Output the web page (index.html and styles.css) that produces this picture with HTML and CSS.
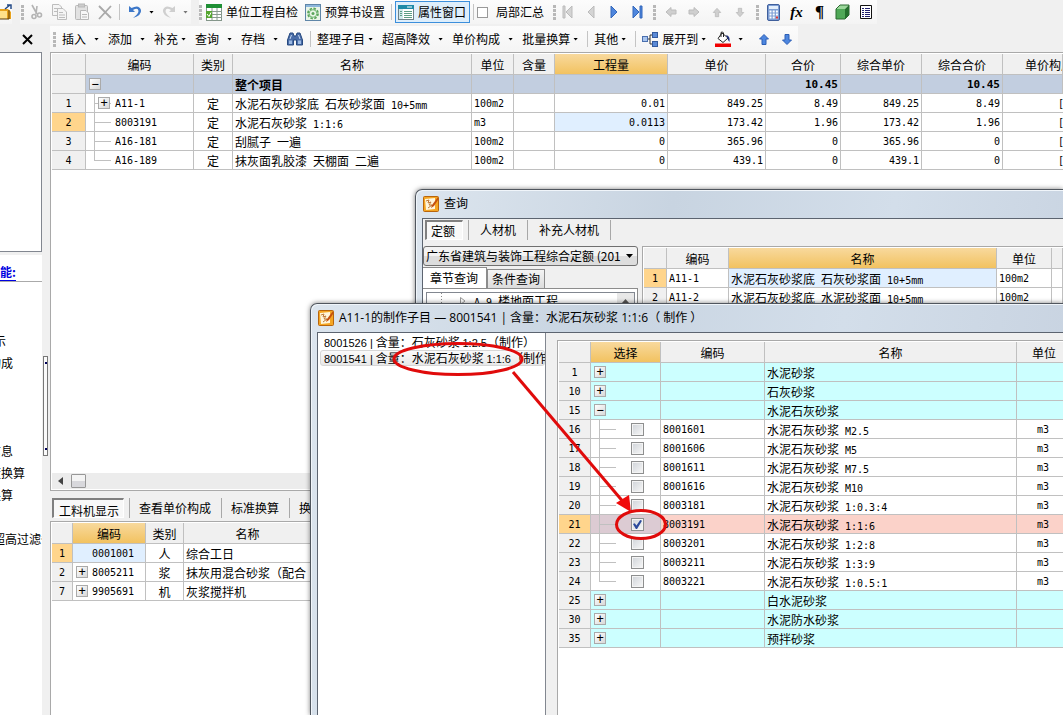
FILE: index.html
```html
<!DOCTYPE html>
<html lang="zh-CN">
<head>
<meta charset="utf-8">
<title>预算书</title>
<link rel="stylesheet" href="styles.css">
</head>
<body>
<div class="app">
  <header class="top">
    <div class="bar">
      <button class="folder" aria-label="打开"><svg width="12" height="18" viewBox="0 0 12 18"><path d="M-1 6H8L11 9V16H-1Z" fill="#e8a21c"/><path d="M-1 8H7V16H-1Z" fill="#ffe08a"/><path d="M-1 16H9V7" fill="none" stroke="#5a3a08"/><path d="M5 6L10 2M7 2H11V6" fill="none" stroke="#234a86" stroke-width="1.5"/></svg></button>
    </div>
    <div class="bar">
      <i class="grip"></i>
      <button class="tool" aria-label="剪切"><svg width="16" height="18" viewBox="0 0 16 18" fill="none" stroke="#b4b4b4" stroke-width="1.6"><path d="M4 2L9 11M9 3L8 11" /><circle cx="6" cy="13.500" r="2"/><circle cx="11.500" cy="12" r="2"/></svg></button>
      <button class="tool" aria-label="复制"><svg width="16" height="18" viewBox="0 0 16 18" fill="#f5f5f5" stroke="#bdbdbd"><path d="M1.500 1.500H8L10.500 4V12.500H1.500Z"/><path d="M3 5.500H7M3 8.500H6"/><path d="M6.500 5.500H12L15.500 9V16.500H6.500Z"/><path d="M8 9.500H12M8 12H14M8 14.500H14"/></svg></button>
      <button class="tool" aria-label="粘贴"><svg width="16" height="18" viewBox="0 0 16 18" fill="#e2e2e2" stroke="#b8b8b8"><rect x="1.500" y="2.500" width="12" height="14" rx="1"/><rect x="4.500" y="1" width="6" height="3" fill="#ccc"/><path d="M6.500 7.500H12L14.500 10V16.500H6.500Z" fill="#f7f7f7"/><path d="M8 11.500H13M8 14H13"/></svg></button>
      <button class="tool" aria-label="删除"><svg width="16" height="18" viewBox="0 0 16 18"><path d="M2 3L14 15M14 3L2 16" stroke="#a9a9a9" stroke-width="1.800"/></svg></button>
      <i class="sep"></i>
      <button class="tool" aria-label="撤销"><svg width="14" height="16" viewBox="0 0 14 16"><path d="M1 2V8H7L5 6Q10 3 10.500 7Q10.500 10 5 14Q14 11 13 6Q11 0 3.500 4Z" fill="#3d78c9"/></svg></button>
      <i class="arrow"></i>
      <button class="tool" aria-label="重做"><svg width="14" height="16" viewBox="0 0 14 16"><path d="M13 2V8H7L9 6Q4 3 3.500 7Q3.500 10 9 14Q0 11 1 6Q3 0 10.500 4Z" fill="#cfcfcf"/></svg></button>
      <i class="arrow dim"></i>
    </div>
    <div class="bar fill">
      <i class="grip"></i>
      <button class="label"><svg width="16" height="17" viewBox="0 0 16 17"><rect x=".5" y=".5" width="15" height="16" fill="#fff" stroke="#84968a"/><path d="M0 0H16V4H0Z" fill="#1f8f35"/><path d="M0 7.500H16M0 10.500H16M0 13.500H16M6 4V17M11 4V17" stroke="#8a9a90"/><path d="M0 7H6V14H0Z" fill="#55a630"/><path d="M1 10L3 12.500L5 8.500" stroke="#fff" fill="none"/></svg>单位工程自检</button>
      <button class="label"><svg width="16" height="17" viewBox="0 0 16 17"><rect x=".5" y=".5" width="15" height="16" fill="#eaf5e8" stroke="#5f86a8"/><path d="M1 2H15" stroke="#8db6dc" stroke-width="2"/><circle cx="8" cy="9.500" r="5" fill="none" stroke="#5ba65b" stroke-width="1.800" stroke-dasharray="2.500 1.400"/><circle cx="8" cy="9.500" r="3.800" fill="none" stroke="#76b876"/><circle cx="8" cy="9.500" r="1.500" fill="#5ba65b"/></svg>预算书设置</button>
      <i class="sep"></i>
      <button class="label on"><svg width="16" height="15" viewBox="0 0 16 15"><rect x=".5" y=".5" width="15" height="14" fill="#fff" stroke="#6d8188"/><path d="M0 0H16V4H0Z" fill="#1e8aa8"/><path d="M9 2H14" stroke="#fff"/><path d="M1 4H5V14H1Z" fill="#cfe8ec"/><path d="M2 6.500H4M2 8.500H4M2 10.500H4M6 6.500H14M6 8.500H14M6 10.500H14M6 12.500H14" stroke="#5d9e86"/></svg>属性窗口</button>
      <i class="sep"></i>
      <label class="check"><input type="checkbox" class="plain">局部汇总</label>
      <i class="grip"></i>
      <button class="tool" aria-label="首条"><svg width="12" height="14" viewBox="0 0 12 14"><path d="M1 1H3V13H1ZM10 1V13L4 7Z" fill="#d4d4d4" stroke="#bbb"/></svg></button>
      <button class="tool" aria-label="上一条"><svg width="12" height="14" viewBox="0 0 12 14"><path d="M9 1V13L3 7Z" fill="#d4d4d4" stroke="#bbb"/></svg></button>
      <button class="tool" aria-label="下一条"><svg width="12" height="14" viewBox="0 0 12 14"><path d="M3 1V13L9 7Z" fill="#4e86dd" stroke="#3267bb"/></svg></button>
      <button class="tool" aria-label="末条"><svg width="12" height="14" viewBox="0 0 12 14"><path d="M2 1V13L8 7ZM9 1H11V13H9Z" fill="#4e86dd" stroke="#3267bb"/></svg></button>
      <i class="grip"></i>
      <button class="tool" aria-label="左移"><svg width="12" height="12" viewBox="0 0 12 12"><path d="M1 6L6 1.500V4H11V8H6V10.500Z" fill="#cfcfcf" stroke="#bcbcbc"/></svg></button>
      <button class="tool" aria-label="右移"><svg width="12" height="12" viewBox="0 0 12 12"><path d="M11 6L6 1.500V4H1V8H6V10.500Z" fill="#cfcfcf" stroke="#bcbcbc"/></svg></button>
      <button class="tool" aria-label="上移"><svg width="10" height="11" viewBox="0 0 12 12"><path d="M6 1L1.500 6H4V11H8V6H10.500Z" fill="#cfcfcf" stroke="#bcbcbc"/></svg></button>
      <button class="tool" aria-label="下移"><svg width="10" height="11" viewBox="0 0 12 12"><path d="M6 11L1.500 6H4V1H8V6H10.500Z" fill="#cfcfcf" stroke="#bcbcbc"/></svg></button>
      <i class="grip"></i>
      <button class="tool" aria-label="计算器"><svg width="13" height="17" viewBox="0 0 13 17"><rect x=".5" y=".5" width="12" height="16" rx="1.500" fill="#7d9ed4" stroke="#3f5f9c"/><path d="M2 2H11V5H2Z" fill="#e3eefb"/><path d="M2.500 7.500H11M2.500 10.500H11M2.500 13.500H11" stroke="#fff" stroke-width="2" stroke-dasharray="2 1.200"/><path d="M8.900 13.500H11" stroke="#d33" stroke-width="2"/></svg></button>
      <button class="tool fx">fx</button>
      <button class="tool para">¶</button>
      <button class="tool" aria-label="立方体"><svg width="15" height="16" viewBox="0 0 15 16"><path d="M1 5L5 1H14L10 5Z" fill="#9bd79b"/><path d="M1 5H10V15H1Z" fill="#4fa857"/><path d="M10 5L14 1V11L10 15Z" fill="#23702c"/><path d="M1 5L5 1H14V11L10 15H1Z" fill="none" stroke="#2a6a30"/></svg></button>
      <button class="tool" aria-label="列表"><svg width="12" height="14" viewBox="0 0 12 14"><path d="M.5.500H11.500V13.500H.5Z" fill="#fff" stroke="#111"/><path d="M2 3.500H4M2 5.500H4M2 7.500H4M2 9.500H4M2 11.500H4M5 3.500H10M5 5.500H10M5 7.500H10M5 9.500H10M5 11.500H10" stroke="#22226e"/></svg></button>
    </div>
  </header>

  <div class="body">
    <aside class="side">
      <div class="sidetop"><button aria-label="关闭"><svg width="11" height="11" viewBox="0 0 11 11"><path d="M1 1L10 10M10 1L1 10" stroke="#000" stroke-width="2"/></svg></button></div>
      <div class="sidebox"></div>
      <h2 class="sidehead"><a href="#">能:</a></h2>
      <ul class="sidelist">
        <li class="short">示</li>
        <li>构成</li>
        <li class="jump">目</li>
        <li>信息</li>
        <li>度换算</li>
        <li>换算</li>
        <li class="skip">超高过滤条</li>
      </ul>
    </aside>
    <div class="gutter"><span class="knob"></span></div>
    <main class="main">
      <div class="bar commands">
        <i class="grip"></i>
        <button class="split">插入<i class="arrow"></i></button>
        <button class="split">添加<i class="arrow"></i></button>
        <button class="split tight">补充<i class="arrow"></i></button>
        <button class="split">查询<i class="arrow"></i></button>
        <button class="split">存档<i class="arrow"></i></button>
        <button class="icon" aria-label="查找"><svg width="16" height="14" viewBox="0 0 16 14"><path d="M3 1H6L7 4H9L10 1H13L15.500 8V13H9.500V8H6.500V13H.5V8Z" fill="#4a6da8" stroke="#274a80"/><path d="M2 8.500H5V12H2ZM11 8.500H14V12H11Z" fill="#9bb9e2"/><path d="M4.500 3L3 7M11.500 3L13 7" stroke="#c6d9f2"/></svg></button>
        <i class="sep"></i>
        <button class="split tight">整理子目<i class="arrow"></i></button>
        <button class="split">超高降效<i class="arrow"></i></button>
        <button class="split">单价构成<i class="arrow"></i></button>
        <button class="split tight">批量换算<i class="arrow"></i></button>
        <i class="sep"></i>
        <button class="split tight">其他<i class="arrow"></i></button>
        <i class="sep"></i>
        <button class="split tight"><svg width="16" height="15" viewBox="0 0 16 15"><path d="M5 7H8M11 3H8V12H11" fill="none" stroke="#333"/><rect x=".5" y="4.500" width="5" height="5" fill="#a9c5ee" stroke="#4a6fae"/><rect x="10.500" y=".5" width="5" height="5" fill="#5b8ad6" stroke="#335a9e"/><rect x="10.500" y="9.500" width="5" height="5" fill="#5b8ad6" stroke="#335a9e"/></svg>展开到<i class="arrow"></i></button>
        <button class="split tight" aria-label="填充颜色"><svg width="16" height="16" viewBox="0 0 16 16"><path d="M7 2L13 7L8 11.500L3 7.500Z" fill="#fff" stroke="#222"/><path d="M6 6V1.500Q7.500 0 8.500 2V6" fill="none" stroke="#222"/><path d="M11 4Q15.500 5 14.500 11Q12.500 9 12.500 7Z" fill="#1d2f7d"/><path d="M0 12.500H16V16H0Z" fill="#f00000"/></svg><i class="arrow"></i></button>
        <button class="tool" aria-label="上移"><svg width="10" height="11" viewBox="0 0 10 11"><path d="M5 .5L.5 5H3V10.500H7V5H9.500Z" fill="#4d86df" stroke="#2c5fb5"/></svg></button>
        <button class="tool" aria-label="下移"><svg width="10" height="11" viewBox="0 0 10 11"><path d="M5 10.500L.5 6H3V.5H7V6H9.500Z" fill="#4d86df" stroke="#2c5fb5"/></svg></button>
      </div>

      <section class="grid maingrid">
        <table>
          <colgroup><col class="w34"><col class="w108"><col class="w39"><col class="w239"><col class="w42"><col class="w41"><col class="w113"><col class="w98"><col class="w75"><col class="w81"><col class="w81"><col></colgroup>
          <thead><tr><th></th><th>编码</th><th>类别</th><th>名称</th><th>单位</th><th>含量</th><th class="hot">工程量</th><th>单价</th><th>合价</th><th>综合单价</th><th>综合合价</th><th class="cut">单价构成</th></tr></thead>
          <tbody>
            <tr class="total"><th></th><td class="node"><button class="toggle" aria-label="折叠">−</button></td><td></td><td>整个项目</td><td></td><td></td><td></td><td></td><td class="num">10.45</td><td></td><td class="num">10.45</td><td></td></tr>
            <tr><th>1</th><td class="branch code child"><button class="toggle" aria-label="展开">+</button>A11-1</td><td class="mid">定</td><td>水泥石灰砂浆底<span class="n"> </span>石灰砂浆面<span class="n"> 10+5mm</span></td><td class="n">100m2</td><td></td><td class="num">0.01</td><td class="num">849.25</td><td class="num">8.49</td><td class="num">849.25</td><td class="num">8.49</td><td class="n cutcell">[</td></tr>
            <tr><th class="cur">2</th><td class="branch code">8003191</td><td class="mid">定</td><td>水泥石灰砂浆<span class="n"> 1:1:6</span></td><td class="n">m3</td><td></td><td class="num sel">0.0113</td><td class="num">173.42</td><td class="num">1.96</td><td class="num">173.42</td><td class="num">1.96</td><td class="n cutcell">[</td></tr>
            <tr><th>3</th><td class="branch code">A16-181</td><td class="mid">定</td><td>刮腻子<span class="n"> </span>一遍</td><td class="n">100m2</td><td></td><td class="num">0</td><td class="num">365.96</td><td class="num">0</td><td class="num">365.96</td><td class="num">0</td><td class="n cutcell">[</td></tr>
            <tr><th>4</th><td class="branch last code">A16-189</td><td class="mid">定</td><td>抹灰面乳胶漆<span class="n"> </span>天棚面<span class="n"> </span>二遍</td><td class="n">100m2</td><td></td><td class="num">0</td><td class="num">439.1</td><td class="num">0</td><td class="num">439.1</td><td class="num">0</td><td class="n cutcell">[</td></tr>
          </tbody>
        </table>
        <div class="scroll"><svg width="5" height="8" viewBox="0 0 5 8"><path d="M5 0V8L0 4Z" fill="#444"/></svg><span class="thumb"></span></div>
      </section>

      <nav class="tabs">
        <button class="tab active">工料机显示</button><button class="tab">查看单价构成</button><button class="tab">标准换算</button><button class="tab">换算信息</button>
      </nav>

      <section class="grid subgrid">
        <table>
          <colgroup><col class="w21"><col class="w73"><col class="w38"><col class="w128"><col></colgroup>
          <thead><tr><th></th><th class="hot">编码</th><th>类别</th><th>名称</th><th></th></tr></thead>
          <tbody>
            <tr><th class="cur">1</th><td class="item sel">0001001</td><td class="mid">人</td><td>综合工日</td><td></td></tr>
            <tr><th>2</th><td class="item node"><button class="toggle" aria-label="展开">+</button>8005211</td><td class="mid">浆</td><td>抹灰用混合砂浆（配合</td><td></td></tr>
            <tr><th>7</th><td class="item node"><button class="toggle" aria-label="展开">+</button>9905691</td><td class="mid">机</td><td>灰浆搅拌机</td><td></td></tr>
          </tbody>
        </table>
      </section>
    </main>
  </div>

  <section class="window query">
    <header class="title"><svg width="16" height="16" viewBox="0 0 16 16"><rect x=".5" y=".5" width="15" height="15" rx="1" fill="#f5a623" stroke="#b8650c"/><path d="M2 3L12 2L12 13L3 14Z" fill="#fff6dc"/><path d="M3 5L6 4L5 7L8 6L6 9L9 9L5 12" fill="none" stroke="#c07a3a"/><path d="M15 1L9 9L8 12L11 10L15 4Z" fill="#c4500f"/></svg>查询</header>
    <div class="client">
      <nav class="tabs">
        <button class="tab active">定额</button><button class="tab">人材机</button><button class="tab">补充人材机</button><i class="end"></i>
      </nav>
      <div class="cols">
        <div class="finder">
          <div class="combo"><select aria-label="定额库"><option>广东省建筑与装饰工程综合定额 (201</option></select><i class="arrow"></i></div>
          <div class="pagetabs"><button class="front">章节查询</button><button>条件查询</button></div>
          <div class="page"><div class="tree"><i class="dots"></i><svg width="6" height="8" viewBox="0 0 6 8"><path d="M.5.500V7.500L5 4Z" fill="#fff" stroke="#999"/></svg><span><span class="n">A.9 </span>楼地面工程</span><span class="up"><svg width="7" height="4" viewBox="0 0 7 4"><path d="M0 4L3.500 0L7 4Z" fill="#555"/></svg></span></div></div>
        </div>
        <div class="grid">
          <table>
            <colgroup><col class="w23"><col class="w62"><col class="w268"><col class="w55"><col></colgroup>
            <thead><tr><th></th><th>编码</th><th class="hot">名称</th><th>单位</th><th></th></tr></thead>
            <tbody>
              <tr><th class="cur">1</th><td class="n">A11-1</td><td class="sel">水泥石灰砂浆底<span class="n"> </span>石灰砂浆面<span class="n"> 10+5mm</span></td><td class="n">100m2</td><td></td></tr>
              <tr><th>2</th><td class="n">A11-2</td><td>水泥石灰砂浆底<span class="n"> </span>水泥砂浆面<span class="n"> 10+5mm</span></td><td class="n">100m2</td><td></td></tr>
            </tbody>
          </table>
        </div>
      </div>
    </div>
  </section>

  <section class="window make">
    <header class="title"><svg width="16" height="16" viewBox="0 0 16 16"><rect x=".5" y=".5" width="15" height="15" rx="1" fill="#f5a623" stroke="#b8650c"/><path d="M2 3L12 2L12 13L3 14Z" fill="#fff6dc"/><path d="M3 5L6 4L5 7L8 6L6 9L9 9L5 12" fill="none" stroke="#c07a3a"/><path d="M15 1L9 9L8 12L11 10L15 4Z" fill="#c4500f"/></svg>A11-1的制作子目 — 8001541 | 含量：水泥石灰砂浆 1:1:6（ 制作 ）</header>
    <div class="client split2">
      <ul class="list">
        <li><span class="s">8001526 | </span>含量：石灰砂浆 <span class="s">1:2.5</span>（制作）</li>
        <li class="picked"><span class="s">8001541 | </span>含量：水泥石灰砂浆 <span class="s">1:1:6</span>（制作）</li>
      </ul>
      <div class="grid">
        <table>
          <colgroup><col class="w32"><col class="w70"><col class="w104"><col><col class="w46"></colgroup>
          <thead><tr><th></th><th class="hot">选择</th><th>编码</th><th>名称</th><th class="edge">单位</th></tr></thead>
          <tbody>
            <tr class="group"><th>1</th><td class="node"><button class="toggle" aria-label="展开">+</button></td><td></td><td>水泥砂浆</td><td class="edge"></td></tr>
            <tr class="group"><th>10</th><td class="node"><button class="toggle" aria-label="展开">+</button></td><td></td><td>石灰砂浆</td><td class="edge"></td></tr>
            <tr class="group"><th>15</th><td class="node"><button class="toggle" aria-label="折叠">−</button></td><td></td><td>水泥石灰砂浆</td><td class="edge"></td></tr>
            <tr><th>16</th><td class="branch pick"><input type="checkbox" aria-label="8001601"></td><td class="n">8001601</td><td>水泥石灰砂浆<span class="n"> M2.5</span></td><td class="unit edge">m3</td></tr>
            <tr><th>17</th><td class="branch pick"><input type="checkbox" aria-label="8001606"></td><td class="n">8001606</td><td>水泥石灰砂浆<span class="n"> M5</span></td><td class="unit edge">m3</td></tr>
            <tr><th>18</th><td class="branch pick"><input type="checkbox" aria-label="8001611"></td><td class="n">8001611</td><td>水泥石灰砂浆<span class="n"> M7.5</span></td><td class="unit edge">m3</td></tr>
            <tr><th>19</th><td class="branch pick"><input type="checkbox" aria-label="8001616"></td><td class="n">8001616</td><td>水泥石灰砂浆<span class="n"> M10</span></td><td class="unit edge">m3</td></tr>
            <tr><th>20</th><td class="branch pick"><input type="checkbox" aria-label="8003181"></td><td class="n">8003181</td><td>水泥石灰砂浆<span class="n"> 1:0.3:4</span></td><td class="unit edge">m3</td></tr>
            <tr class="chosen"><th class="cur">21</th><td class="branch pick"><input type="checkbox" aria-label="8003191" checked></td><td class="n">8003191</td><td>水泥石灰砂浆<span class="n"> 1:1:6</span></td><td class="unit edge">m3</td></tr>
            <tr><th>22</th><td class="branch pick"><input type="checkbox" aria-label="8003201"></td><td class="n">8003201</td><td>水泥石灰砂浆<span class="n"> 1:2:8</span></td><td class="unit edge">m3</td></tr>
            <tr><th>23</th><td class="branch pick"><input type="checkbox" aria-label="8003211"></td><td class="n">8003211</td><td>水泥石灰砂浆<span class="n"> 1:3:9</span></td><td class="unit edge">m3</td></tr>
            <tr><th>24</th><td class="branch last pick"><input type="checkbox" aria-label="8003221"></td><td class="n">8003221</td><td>水泥石灰砂浆<span class="n"> 1:0.5:1</span></td><td class="unit edge">m3</td></tr>
            <tr class="group"><th>25</th><td class="node"><button class="toggle" aria-label="展开">+</button></td><td></td><td>白水泥砂浆</td><td class="edge"></td></tr>
            <tr class="group"><th>30</th><td class="node"><button class="toggle" aria-label="展开">+</button></td><td></td><td>水泥防水砂浆</td><td class="edge"></td></tr>
            <tr class="group"><th>35</th><td class="node"><button class="toggle" aria-label="展开">+</button></td><td></td><td>预拌砂浆</td><td class="edge"></td></tr>
          </tbody>
        </table>
      </div>
    </div>
    <svg class="marks" width="360" height="240" viewBox="310 303 360 240"><g fill="none" stroke="#e00b0b" stroke-width="3"><ellipse cx="458" cy="359" rx="64" ry="15.500"/><ellipse cx="641" cy="524.500" rx="24.500" ry="14"/><path d="M513 372L625 504"/></g><path d="M631 512L616 503L629 495Z" fill="#f00b0b"/></svg>
  </section>
</div>
</body>
</html>
```

FILE: styles.css
```css
* { box-sizing: border-box; }
body {
  margin: 0;
  background: #f0f0f0;
  color: #000;
  font: 12px/18px "Noto Sans CJK SC", sans-serif;
  overflow: hidden;
}
button {
  font: inherit;
  color: inherit;
  background: none;
  border: 0;
  margin: 0;
  padding: 0;
  white-space: nowrap;
}
svg { display: block; flex: none; }
h2, ul { margin: 0; padding: 0; list-style: none; }

.app { position: relative; display: flex; flex-direction: column; height: 100vh; overflow: hidden; }

/* toolbars */
.top { display: flex; flex: none; height: 26px; gap: 8px; }
.bar { display: flex; align-items: center; width: fit-content; height: 24px; background: linear-gradient(#fcfcfc, #f4f4f4); }
.folder { width: 12px; }
.grip { flex: none; width: 3px; height: 15px; margin-left: 1px; background: repeating-linear-gradient(#b8b8b8 0 3px, transparent 3px 4px); }
.fill > .grip:first-child { margin-left: 0; }
.tool { display: flex; flex: none; align-items: center; justify-content: center; width: 23px; height: 22px; }
.sep { flex: none; width: 1px; height: 16px; margin: 0 3px; background: #c4c4c4; }
.arrow { flex: none; width: 5px; height: 3px; background: #000; clip-path: polygon(0 0, 100% 0, 50% 100%); }
.top .arrow { margin: 0 3px; }
.arrow.dim { background: #777; }
.label { display: flex; align-items: center; gap: 4px; padding: 0 3px 0 4px; }
.label.on { height: 22px; padding: 0 3px 0 2px; border: 1px solid #3c8fdc; background: #deeefb; }
.check { display: flex; align-items: center; gap: 8px; padding-right: 8px; white-space: nowrap; }
.plain { appearance: none; width: 11px; height: 11px; margin: 0; border: 1px solid #999; background: #fff; }
.tool + .grip { margin: 0 3px 0 5px; }
.fx { font: italic bold 15px/20px "Liberation Serif", serif; }
.para { font: bold 17px/20px "Liberation Serif", serif; }
.commands { flex: none; height: 26px; }
.commands .grip { margin: 0 6px 0 3px; }
.commands .sep { margin: 0 6px 0 0; }
.split { display: flex; align-items: center; padding-right: 9px; }
.split svg { margin-right: 4px; }
.split .arrow { margin-left: 8px; }
.split.tight .arrow { margin-left: 3px; }
.icon { padding-right: 7px; }

/* left panel */
.body { display: flex; flex: 1; min-height: 0; }
.side { display: flex; flex: none; flex-direction: column; width: 42px; overflow: hidden; background: #fff; }
.sidetop { display: flex; align-items: center; flex: none; height: 26px; padding-left: 22px; background: #f0f0f0; }
.sidebox { flex: none; height: 200px; border: 1px solid #828790; border-left: 0; }
.sidehead { flex: none; height: 30px; padding-top: 8px; border-top: 3px solid #f0f0f0; border-bottom: 1px solid #aaa; font-size: 12px; line-height: 18px; }
.sidehead a { color: #0000e0; text-decoration: none; border-bottom: 1px solid #0000e0; }
.sidelist { padding-top: 48px; white-space: nowrap; }
.sidelist li { height: 22px; line-height: 22px; text-indent: -11px; }
.sidelist .short { text-indent: -6px; }
.sidelist .jump { margin-top: 44px; }
.sidelist .skip { margin-top: 22px; text-indent: -7px; }
.gutter { flex: none; width: 8px; padding: 330px 2px 0 1px; }
.knob { display: block; height: 100px; border: 1px solid #777; background: radial-gradient(circle, #00005a 1px, transparent 1px) 0 4px / 4px 4px no-repeat, radial-gradient(circle, #00005a 1px, transparent 1px) 0 90px / 4px 4px no-repeat, #fafafa; }
.main { display: flex; flex: 1; flex-direction: column; min-width: 0; }

/* grids */
.grid { border: 1px solid #a9a9a9; border-right: 0; padding: 1px 0 0 1px; background: #fff; overflow: hidden; }
.maingrid { display: flex; flex: 1; flex-direction: column; }
.subgrid { flex: none; height: 194px; border-bottom: 0; }
table { width: 100%; table-layout: fixed; border-collapse: separate; border-spacing: 0; }
th, td {
  height: 19px;
  padding: 1px 2px 0;
  border: 0 solid #c0c0c0;
  border-width: 0 1px 1px 0;
  overflow: hidden;
  white-space: nowrap;
  text-align: left;
  font-weight: 400;
  line-height: 17px;
}
th { background: #f0f0f0; text-align: center; }
thead th { height: 21px; line-height: 19px; }
tbody th, .n, .num, .code, .item, .unit { font-family: "DejaVu Sans Mono", "Noto Sans CJK SC", monospace; font-size: 10px; }
span.n { line-height: 10px; white-space: pre; }
.num { text-align: right; }
.mid { text-align: center; }
.unit { padding-left: 20px; }
.edge { border-right: 0; }
.hot { background: linear-gradient(#f8d99d, #f2c260); }
tbody .cur { background: #ffd58c; }
.sel { background: #e0efff; }
.total td { background: #c2cee0; font-weight: 700; }
.total .num { font-size: 11px; }
.group td { background: #ccffff; }
.chosen td { background-color: #fbd2c9; }
.chosen .pick { background-color: #dccbd3; }
.cut { text-align: left; padding-left: 22px; }
.cutcell { padding: 1px 0 0 55px; border-right: 0; }
.branch {
  padding-left: 29px;
  background-image: linear-gradient(#c0c0c0, #c0c0c0), linear-gradient(#c0c0c0, #c0c0c0);
  background-position: 8px 0, 8px 9px;
  background-size: 1px 100%, 17px 1px;
  background-repeat: no-repeat;
}
.branch.last { background-size: 1px 9px, 17px 1px; }
.child { padding-left: 12px; }
.child .toggle { margin-right: 5px; }
.node { padding-left: 3px; }
.item { padding-left: 19px; }
.item.node { padding-left: 3px; }
.item .toggle { margin-right: 4px; }
.pick { padding-left: 40px; }
.toggle {
  width: 12px;
  height: 12px;
  margin-top: 2px;
  border: 1px solid #aaa;
  background: linear-gradient(135deg, #fff, #d8d8d8);
  font: 12px/10px "DejaVu Sans Mono", monospace;
  text-align: center;
  vertical-align: top;
}
.pick input {
  display: block;
  appearance: none;
  width: 13px;
  height: 13px;
  margin: 0;
  border: 1px solid #8e8f8f;
  box-shadow: inset 0 0 0 1px #f4f4f4;
  background: linear-gradient(135deg, #cfd3d8, #f8f8f8);
}
.pick input:checked::before { content: ""; display: block; width: 9px; height: 9px; margin: 1px; background: #2c4a9c; clip-path: polygon(0 45%, 20% 35%, 38% 62%, 80% 0, 100% 8%, 45% 100%, 32% 100%); }
.w21 { width: 21px; } .w23 { width: 23px; } .w32 { width: 32px; } .w34 { width: 34px; }
.w38 { width: 38px; } .w39 { width: 39px; } .w41 { width: 41px; } .w42 { width: 42px; }
.w46 { width: 46px; } .w55 { width: 55px; } .w62 { width: 62px; } .w70 { width: 70px; }
.w73 { width: 73px; } .w75 { width: 75px; } .w81 { width: 81px; } .w98 { width: 98px; }
.w104 { width: 104px; } .w108 { width: 108px; } .w113 { width: 113px; } .w128 { width: 128px; }
.w239 { width: 239px; } .w268 { width: 268px; }
th.edge { padding-left: 10px; }

.scroll { display: flex; align-items: center; gap: 8px; height: 16px; margin: auto 0 1px; padding-left: 6px; background: #ececec; }
.thumb { width: 15px; height: 14px; border: 1px solid #979797; border-radius: 1px; background: linear-gradient(#f4f4f4 50%, #d8d8dc 50%); }

/* tab strips */
.tabs { display: flex; flex: none; align-items: center; height: 30px; padding: 4px 0 0 2px; }
.tab { height: 20px; padding: 0 10px 0 9px; border-left: 1px solid #a8a8a8; }
.tab.active { margin-right: 5px; padding: 2px 4px 0 5px; border: 1px solid #fff; border-top: 2px solid #808080; border-left: 2px solid #808080; background: #f8f8f8; line-height: 17px; }

/* floating windows */
.window {
  position: absolute;
  right: 0;
  bottom: 0;
  display: flex;
  flex-direction: column;
  padding-left: 6px;
  border: 1px solid #50565e;
  border-width: 1px 0 0 1px;
  border-radius: 7px 0 0 0;
  background: linear-gradient(100deg, #dce5ee, #c8d4e1 35%, #d3deea 65%, #c6d1df);
  box-shadow: inset 1px 1px 0 #f0f5fa, 0 0 5px rgba(0, 0, 0, 0.5);
}
.query { left: 415px; top: 189px; }
.make { left: 310px; top: 303px; }
.title { display: flex; align-items: center; gap: 5px; flex: none; height: 28px; padding-left: 1px; font-family: "Open Sans", "Noto Sans CJK SC", sans-serif; white-space: nowrap; }
.client { flex: 1; min-height: 0; border: 1px solid #5c6470; border-width: 1px 0 0 1px; background: #f0f0f0; }
.query .tabs { height: 22px; padding-top: 0; }
.query .tab { padding: 0 11px; }
.query .tab.active { padding: 0 7px 0 4px; }
.end { width: 1px; height: 20px; background: #a8a8a8; }
.cols { display: flex; padding-top: 5px; }
.finder { flex: none; width: 215px; margin-right: 4px; }
.combo { display: flex; align-items: center; height: 20px; border: 1px solid #707070; border-radius: 3px; background: linear-gradient(#f3f3f3 50%, #dddddd 50%); }
.combo select { appearance: none; width: 200px; height: 18px; padding: 0 0 0 2px; border: 0; background: none; color: #000; font: 12px/18px "Noto Sans CJK SC", sans-serif; }
.combo .arrow { width: 7px; height: 4px; margin-left: 2px; }
.pagetabs { display: flex; align-items: flex-end; height: 22px; }
.pagetabs button { height: 19px; padding: 0 4px; border: 1px solid #8c8c8c; border-bottom: 0; background: linear-gradient(#f4f4f4, #dcdcdc); }
.pagetabs .front { height: 21px; padding: 0 8px 0 7px; border-left: 0; background: #fff; }
.page { height: 200px; padding: 3px 2px 0 3px; border: 1px solid #8c8c8c; border-left: 0; background: #fff; }
.tree { display: flex; align-items: center; height: 18px; border: 1px solid #828790; line-height: 16px; }
.dots { width: 1px; height: 16px; margin: 0 18px 0 14px; background: repeating-linear-gradient(#888 0 1px, transparent 1px 3px); }
.tree svg { margin-right: 8px; }
.up { display: flex; align-items: center; width: 17px; height: 16px; margin-left: auto; padding-left: 5px; background: #e8e8e8; }
.cols .grid { flex: 1; min-width: 0; }
.split2 { display: flex; }
.list { flex: none; width: 228px; padding: 1px 0 0 2px; border-right: 1px solid #828790; background: #fff; overflow: hidden; white-space: nowrap; }
.list li { height: 16px; padding-left: 3px; border: 1px solid transparent; line-height: 14px; }
.list .picked { border-color: #d6d6d6; border-radius: 3px; background: linear-gradient(#fafafa, #e8e8e8); }
.s { font-family: "Liberation Sans", sans-serif; font-size: 11px; white-space: pre; }
.split2 .grid { flex: 1; min-width: 0; margin: 7px 0 0 11px; border-bottom: 0; }
.marks { position: absolute; left: -1px; top: -1px; pointer-events: none; }
```
